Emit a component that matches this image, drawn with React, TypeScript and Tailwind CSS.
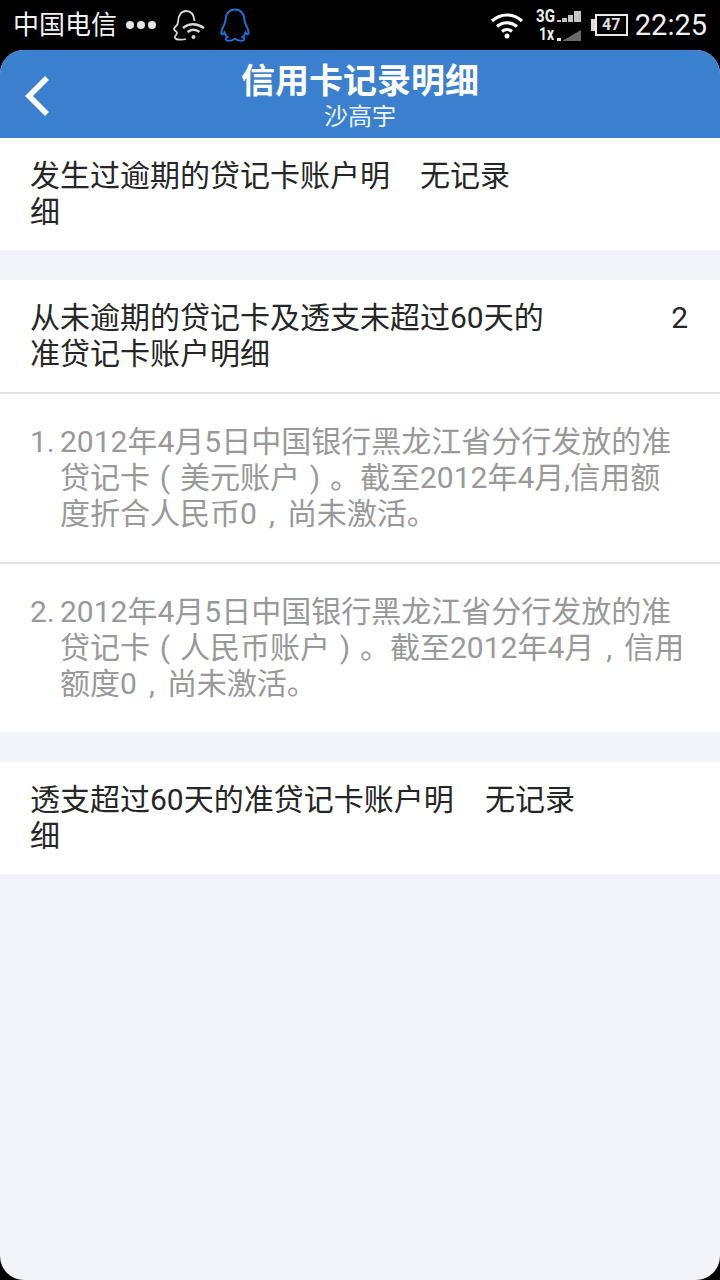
const FONT = "font-['Roboto','Noto_Sans_CJK_SC',sans-serif]"

function QQIcon({ color }: { color: string }) {
  return (
    <svg width="32" height="34" viewBox="0 0 32 34" fill="none" stroke={color} strokeWidth="2">
      <path d="M16 1.500c-6 0-9.500 4.500-9.500 10.500 0 2-.5 3-1.500 5-1.500 3-3 6-2.500 8.500.3 1.500 1.500 1 3-1 .5 2 1.500 3.500 3 4.500-2 1-2.500 3-.5 3.500 2.500.5 5.500 0 7.500-1.500h1c2 1.500 5 2 7.500 1.500 2-.5 1.500-2.500-.5-3.500 1.500-1 2.500-2.500 3-4.500 1.500 2 2.700 2.500 3 1 .5-2.500-1-5.500-2.500-8.500-1-2-1.500-3-1.500-5C25.500 6 22 1.500 16 1.500z" />
    </svg>
  )
}

function StatusBar() {
  return (
    <div className="h-[50px] flex items-center justify-between bg-black text-white pl-[13px] pr-[13px]">
      <div className="flex items-center">
        <span className="text-[26px] leading-[50px] text-[#f2f2f2]">中国电信</span>
        <div className="flex gap-[3px] ml-[9px]">
          <div className="w-[8px] h-[8px] rounded-full bg-[#e6e6e6]" />
          <div className="w-[8px] h-[8px] rounded-full bg-[#e6e6e6]" />
          <div className="w-[8px] h-[8px] rounded-full bg-[#e6e6e6]" />
        </div>
        <svg className="ml-[15px]" width="34" height="34" viewBox="0 0 34 34" fill="none" stroke="#d8d8d8" strokeWidth="1.800">
          <path d="M15 31c-3 1-10 1-11-1s2-3 2-5-3-2-3-4 4-3 4-7c0-6 3-11 8-11 5 0 8 4 8.500 10" />
          <path d="M12 20c6-5 14-5 21 0" strokeWidth="2.500" />
          <path d="M16.500 24c4-3 8-3 12 0" strokeWidth="2.500" />
          <circle cx="22.500" cy="29" r="2" fill="#d8d8d8" stroke="none" />
        </svg>
        <div className="ml-[14px]">
          <QQIcon color="#1f6fd6" />
        </div>
      </div>
      <div className="flex items-center">
        <svg width="34" height="28" viewBox="0 0 34 28" fill="none" stroke="#fff" strokeWidth="3.200">
          <path d="M2 10c9-8 21-8 30 0" />
          <path d="M7 15.500c6-5 14-5 20 0" />
          <path d="M12 20.500c3-2.500 7-2.500 10 0" />
          <circle cx="17" cy="25" r="2.500" fill="#fff" stroke="none" />
        </svg>
        <svg className="ml-[9px]" width="48" height="46" viewBox="0 -5 48 46">
          <path d="M24 15h4v-2h-4zM29 15h5v-4h-5zM35 15h5V8h-5zM41 15h7V4h-7z" fill="#c4c4c4" />
          <path d="M24 34h4v-3h-4z" fill="#e8e8e8" />
          <path d="M29 34 48 23v11z" fill="#6a6a6a" />
          <text x="3" y="15" fill="#eee" fontSize="19" fontWeight="700" fontFamily="Roboto" textLength="19" lengthAdjust="spacingAndGlyphs">3G</text>
          <text x="6" y="33" fill="#eee" fontSize="18" fontWeight="700" fontFamily="Roboto" textLength="15" lengthAdjust="spacingAndGlyphs">1x</text>
        </svg>
        <div className="ml-[10px] flex items-center">
          <div className="w-[4px] h-[12px] bg-[#ddd]" />
          <div className="w-[33px] h-[22px] border-2 border-[#e8e8e8] flex items-center justify-center">
            <span className="text-[16px] leading-none font-bold text-[#ddd] font-['Roboto',sans-serif]">47</span>
          </div>
        </div>
        <span className="ml-[7px] text-[29px] leading-[50px] text-[#f0f0f0] font-['Roboto',sans-serif]">22:25</span>
      </div>
    </div>
  )
}

function Row({ children }: { children: React.ReactNode }) {
  return <div className="px-[30px] py-[20px] flex text-[30px] leading-[36px] text-[#262626]">{children}</div>
}

// punctuation sits centred in a full-width cell on this device
function P({ c }: { c: string }) {
  return <span className="inline-block w-[30px] text-center">{c}</span>
}

function Item({ n, children }: { n: string; children: React.ReactNode }) {
  return (
    <div className="pl-[30px] py-[30px] flex text-[30px] leading-[36px] text-[#999]">
      <span className="w-[30px] shrink-0">{n}</span>
      <span>{children}</span>
    </div>
  )
}

export default function App() {
  return (
    <div className={`w-[720px] h-[1280px] bg-black flex flex-col overflow-hidden ${FONT}`}>
      <StatusBar />
      <div className="flex-1 flex flex-col rounded-[24px] overflow-hidden bg-[#f3f4f9]">
        <header className="h-[88px] bg-[#3b80cf] text-white flex items-center justify-center relative">
          <svg className="absolute left-[22px] top-[24px]" width="32" height="44" viewBox="0 0 32 44" fill="none" stroke="#fff" strokeWidth="5.500">
            <path d="M25 4 7 22l18 18" />
          </svg>
          <div className="text-center pt-[4px]">
            <div className="text-[34px] leading-[40px] font-bold">信用卡记录明细</div>
            <div className="text-[24px] leading-[28px] mt-[2px] text-[#eef4fb]">沙高宇</div>
          </div>
        </header>

        <section className="bg-white h-[112px]">
          <Row>
            <span className="w-[390px] shrink-0">发生过逾期的贷记卡账户明<br />细</span>
            <span>无记录</span>
          </Row>
        </section>

        <section className="bg-white mt-[30px]">
          <div className="h-[114px] border-b-2 border-[#e2e2e2]">
            <Row>
              <span className="flex-1">从未逾期的贷记卡及透支未超过60天的<br />准贷记卡账户明细</span>
              <span className="mr-[2px]">2</span>
            </Row>
          </div>
          <div className="border-b-2 border-[#e2e2e2] h-[170px]">
            <Item n="1.">2012年4月5日中国银行黑龙江省分行发放的准<br />贷记卡<P c="(" />美元账户<P c=")" />。截至2012年4月,信用额<br />度折合人民币0<P c="," />尚未激活。</Item>
          </div>
          <div className="h-[168px]">
            <Item n="2.">2012年4月5日中国银行黑龙江省分行发放的准<br />贷记卡<P c="(" />人民币账户<P c=")" />。截至2012年4月<P c="," />信用<br />额度0<P c="," />尚未激活。</Item>
          </div>
        </section>

        <section className="bg-white mt-[30px] h-[112px]">
          <Row>
            <span className="w-[455px] shrink-0">透支超过60天的准贷记卡账户明<br />细</span>
            <span>无记录</span>
          </Row>
        </section>
      </div>
    </div>
  )
}
